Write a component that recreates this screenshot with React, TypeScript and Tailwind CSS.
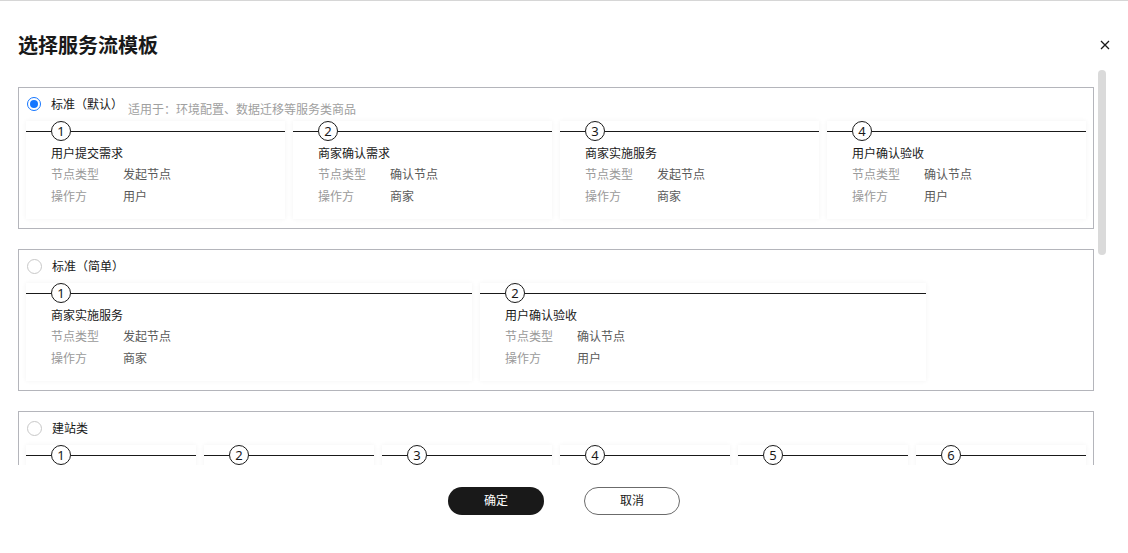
import React from "react";

type Step = { title: string; type: string; who: string };

const templates: {
  name: string;
  hint?: string;
  checked: boolean;
  colClass: string;
  steps: Step[];
}[] = [
  {
    name: "标准（默认）",
    hint: "适用于：环境配置、数据迁移等服务类商品",
    checked: true,
    colClass: "flex-1",
    steps: [
      { title: "用户提交需求", type: "发起节点", who: "用户" },
      { title: "商家确认需求", type: "确认节点", who: "商家" },
      { title: "商家实施服务", type: "发起节点", who: "商家" },
      { title: "用户确认验收", type: "确认节点", who: "用户" },
    ],
  },
  {
    name: "标准（简单）",
    checked: false,
    colClass: "w-[446px]",
    steps: [
      { title: "商家实施服务", type: "发起节点", who: "商家" },
      { title: "用户确认验收", type: "确认节点", who: "用户" },
    ],
  },
  {
    name: "建站类",
    checked: false,
    colClass: "flex-1",
    steps: [
      { title: "用户提交需求", type: "发起节点", who: "用户" },
      { title: "商家确认需求", type: "确认节点", who: "商家" },
      { title: "商家提交设计", type: "发起节点", who: "商家" },
      { title: "用户确认设计", type: "确认节点", who: "用户" },
      { title: "商家实施建站", type: "发起节点", who: "商家" },
      { title: "用户确认验收", type: "确认节点", who: "用户" },
    ],
  },
];

function Radio({ checked }: { checked: boolean }) {
  if (checked) {
    return (
      <div className="w-[14px] h-[14px] rounded-full border-[1.5px] border-[#1476ff] flex items-center justify-center shrink-0">
        <div className="w-2 h-2 rounded-full bg-[#1476ff]" />
      </div>
    );
  }
  return <div className="w-[15px] h-[15px] rounded-full border border-[#c8c8c8] shrink-0" />;
}

function StepCol({ step, index, colClass }: { step: Step; index: number; colClass: string }) {
  return (
    <div className={`${colClass} pb-[12px] shadow-[0_0_5px_rgba(0,0,0,0.05)]`}>
      <div className="flex items-center h-5">
        <div className="w-[25px] h-px bg-[#191919]" />
        <div className="w-5 h-5 rounded-full border border-[#191919] flex items-center justify-center text-[13px] leading-none text-[#191919] shrink-0">
          {index + 1}
        </div>
        <div className="flex-1 h-px bg-[#191919]" />
      </div>
      <div className="pl-[25px] mt-[3px] text-[12px] leading-5">
        <div className="text-[#191919]">{step.title}</div>
        <div className="flex mt-px">
          <span className="w-[72px] text-[#9a9a9a]">节点类型</span>
          <span className="text-[#595959]">{step.type}</span>
        </div>
        <div className="flex mt-[2px]">
          <span className="w-[72px] text-[#9a9a9a]">操作方</span>
          <span className="text-[#595959]">{step.who}</span>
        </div>
      </div>
    </div>
  );
}

export default function App() {
  return (
    <div
      className="w-[1128px] h-[553px] bg-white border-t border-[#d6d6d6] flex flex-col overflow-hidden"
      style={{ fontFamily: '"Noto Sans", "Noto Sans CJK SC", sans-serif' }}
    >
      <div className="flex items-start justify-between pl-[18px] pr-[18px] pt-[30px] h-[69px]">
        <h1 className="text-[20px] leading-7 font-bold text-[#191919]" style={{ fontFamily: '"Noto Sans CJK SC", sans-serif' }}>
          选择服务流模板
        </h1>
        <svg width="10" height="10" viewBox="0 0 10 10" className="mt-[9px]">
          <path d="M1 1L9 9M9 1L1 9" stroke="#191919" strokeWidth="1.3" />
        </svg>
      </div>

      <div className="flex h-[395px] pl-[18px]">
        <div className="w-[1076px] overflow-hidden pt-[17px] flex flex-col gap-5">
          {templates.map((t) => (
            <div key={t.name} className="border border-[#b4b5bb] px-[7px] pt-[6px] pb-[9px] shrink-0">
              <div className="flex items-start h-5 pl-[1px]">
                <div className="flex items-center h-5">
                  <Radio checked={t.checked} />
                  <span className="ml-[10px] text-[12px] text-[#191919] w-[72px]" style={{ fontFamily: '"Noto Sans CJK SC", sans-serif' }}>
                    {t.name}
                  </span>
                </div>
                {t.hint && (
                  <span className="ml-[5px] mt-[6px] text-[12px] leading-5 text-[#a0a0a0]">{t.hint}</span>
                )}
              </div>
              <div className="flex gap-2 mt-[7px]">
                {t.steps.map((s, i) => (
                  <StepCol key={i} step={s} index={i} colClass={t.colClass} />
                ))}
              </div>
            </div>
          ))}
        </div>
        <div className="ml-1 w-2">
          <div className="h-[185px] w-2 rounded-full bg-[#dadada]" />
        </div>
      </div>

      <div className="flex justify-center gap-10 pt-[22px]">
        <button className="w-[96px] h-7 rounded-full bg-[#191919] text-white text-[12px]">确定</button>
        <button className="w-[96px] h-7 rounded-full border border-[#6b6b6b] text-[#191919] text-[12px]">取消</button>
      </div>
    </div>
  );
}
